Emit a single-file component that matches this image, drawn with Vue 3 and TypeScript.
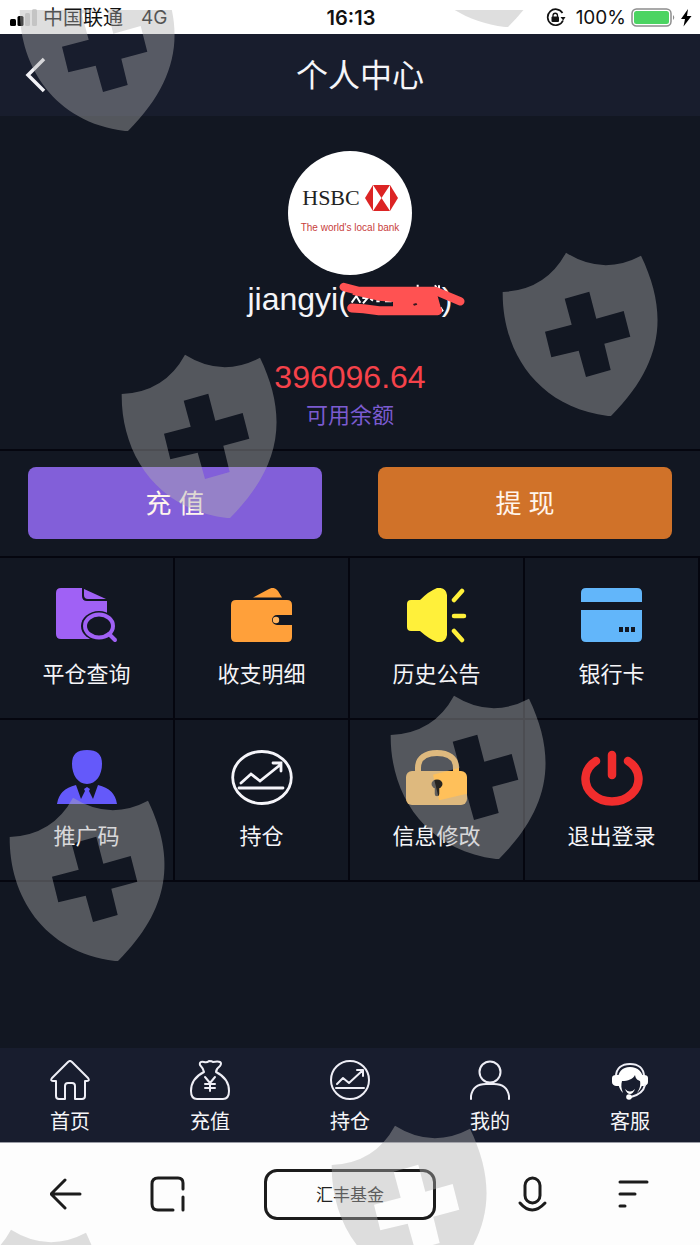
<script setup lang="ts">
interface Item {
  label: string
  icon: string
}

const services: Item[] = [
  { label: '平仓查询', icon: 'search' },
  { label: '收支明细', icon: 'wallet' },
  { label: '历史公告', icon: 'notice' },
  { label: '银行卡', icon: 'card' },
  { label: '推广码', icon: 'person' },
  { label: '持仓', icon: 'chart' },
  { label: '信息修改', icon: 'lock' },
  { label: '退出登录', icon: 'power' },
]

const tabs: Item[] = [
  { label: '首页', icon: 'home' },
  { label: '充值', icon: 'bag' },
  { label: '持仓', icon: 'trend' },
  { label: '我的', icon: 'me' },
  { label: '客服', icon: 'service' },
]

const shields: [number, number][] = [
  [19, -43],
  [399, -147],
  [502, 242],
  [121, 344],
  [390, 685],
  [9, 787],
  [331, 1115],
  [-53, 1219],
]
</script>

<template>
  <div class="page">
    <div class="status">
      <div class="status-left">
        <svg class="signal" width="28" height="18" viewBox="0 0 28 18" aria-hidden="true">
          <rect x="0" y="10" width="6" height="7" rx="1.5" fill="#000" />
          <rect x="7.5" y="7" width="6" height="10" rx="1.5" fill="#000" />
          <rect x="15" y="4" width="5" height="13" rx="1.5" fill="#d2d2d2" />
          <rect x="22" y="0" width="5" height="17" rx="1.5" fill="#d2d2d2" />
        </svg>
        <span class="carrier">中国联通</span>
        <span>4G</span>
      </div>
      <time class="clock">16:13</time>
      <div class="status-right">
        <svg width="20" height="20" viewBox="0 0 20 20" fill="none" stroke="#111" aria-hidden="true">
          <path d="M16.5 5A8 8 0 1 0 17 12.5" stroke-width="1.7" />
          <path d="M14.5 9h5l-2.300 3.500z" fill="#111" stroke="none" />
          <rect x="5.5" y="8.5" width="7.5" height="5.5" rx="1" fill="#111" stroke="none" />
          <path d="M7 9V7.500a2.200 2.200 0 0 1 4.500 0V9" stroke-width="1.3" />
        </svg>
        <span class="percent">100%</span>
        <svg width="46" height="20" viewBox="0 0 46 20" aria-hidden="true">
          <rect x="1" y="1" width="39" height="17" rx="4.5" fill="#fff" stroke="#8d8d8d" stroke-width="1.5" />
          <rect x="3" y="3" width="35" height="13" rx="2.5" fill="#4cd462" />
          <path d="M42 7q2.500 2.500 0 5z" fill="#8d8d8d" />
        </svg>
        <svg width="12" height="18" viewBox="0 0 12 18" aria-hidden="true">
          <path d="M8 0 1 10h4L3.500 17.500 11.500 7H7z" fill="#000" />
        </svg>
      </div>
    </div>

    <header class="header">
      <button class="back" type="button" aria-label="返回">
        <svg width="22" height="36" viewBox="0 0 22 36" fill="none" stroke="#f2f2f6" stroke-width="3.5" aria-hidden="true">
          <path d="M20 2 4 18l16 16" />
        </svg>
      </button>
      <h1>个人中心</h1>
    </header>

    <main>
      <section class="profile">
        <div class="avatar">
          <div class="brand">
            <span>HSBC</span>
            <svg width="33" height="26" viewBox="0 0 33 26" aria-hidden="true">
              <path d="M8 0h17l8 13-8 13H8L0 13z" fill="#dc2424" />
              <path d="M8 0v26l8.500-13zM25 0v26l-8.500-13z" fill="#fff" />
            </svg>
          </div>
          <div class="slogan">The world's local bank</div>
        </div>
        <div class="name">
          jiangyi(<span class="hidden-name"></span>)
          <svg class="scribble" width="126" height="34" viewBox="0 0 378 102" aria-hidden="true">
            <path d="M38 62 52 42l12 20M70 48h16L72 64M94 50l8 6M112 58h10M138 58h20M236 8v16M288 10l12 20M300 10v26M304 76l8 12" fill="none" stroke="#fff" stroke-width="6" />
            <g fill="none" stroke="#ff5252" stroke-linecap="round" stroke-linejoin="round">
              <path d="M14 15 60 27H290L364 58" stroke-width="25" />
              <path d="M38 78 74 80 120 86H296" stroke-width="27" />
            </g>
            <path d="M50 20H290L309 90H162V60L120 56 40 38z" fill="#ff5252" />
            <path d="m222 66 10-3 3 5-10 3z" fill="#3a1820" />
          </svg>
        </div>
        <div class="amount">396096.64</div>
        <div class="amount-label">可用余额</div>
      </section>

      <div class="actions">
        <button type="button" class="recharge">充 值</button>
        <button type="button" class="withdraw">提 现</button>
      </div>

      <nav class="services" aria-label="服务">
        <a v-for="s in services" :key="s.label" href="#">
          <svg width="62" height="56" viewBox="0 0 62 56" fill="none" aria-hidden="true">
            <template v-if="s.icon === 'search'">
              <path d="M5 0h21v8q0 5 5 5h20v38H5q-5 0-5-5V5q0-5 5-5z" fill="#a061f5" />
              <path d="m28 1 22 10H32q-4 0-4-4z" fill="#a061f5" />
              <ellipse cx="43" cy="38" rx="18" ry="15" fill="#121722" />
              <ellipse cx="43" cy="38" rx="14" ry="11.5" stroke="#a061f5" stroke-width="4" />
              <path d="m53 46 6 6" stroke="#a061f5" stroke-width="4" stroke-linecap="round" />
            </template>
            <template v-else-if="s.icon === 'wallet'">
              <path d="M22 9.500 38 1q5-3 9 2l4 6.500z" fill="#ffa03a" />
              <path d="M5 12h51q5 0 5 5v10H46a5 5 0 0 0 0 10h15v12q0 5-5 5H5q-5 0-5-5V17q0-5 5-5z" fill="#ffa03a" />
              <circle cx="45" cy="32" r="3.2" fill="#ffb45f" />
            </template>
            <template v-else-if="s.icon === 'notice'">
              <path d="M5 12h9Q23 3 31 0q9-1 10 7v40q-1 8-10 7-8-3-17-11H5q-4 0-4-4V16q0-4 4-4z" fill="#fff03a" />
              <path d="m48 12 8-9M48 28h10M48 43l8 9" stroke="#fff03a" stroke-width="4.5" stroke-linecap="round" />
            </template>
            <template v-else-if="s.icon === 'card'">
              <path d="M0 14V5q0-5 5-5h51q5 0 5 5v9z" fill="#62b6fa" />
              <path d="M0 22h61v27q0 5-5 5H5q-5 0-5-5z" fill="#62b6fa" />
              <path d="M38 39h4v5h-4zM44 39h4v5h-4zM50 39h4v5h-4z" fill="#121722" />
            </template>
            <template v-else-if="s.icon === 'person'">
              <path d="M31 0C41 0 46 4 46 14c0 11-6 20-15 20S16 25 16 14C16 4 21 0 31 0z" fill="#6459fa" />
              <path d="M20 35q-17 4-19 19h60q-2-15-19-19l-5 14-4-8 1-2-3-2-3 2 1 2-4 8z" fill="#6459fa" />
            </template>
            <template v-else-if="s.icon === 'chart'">
              <g stroke="#f5f5fa" stroke-width="2.8" stroke-linecap="round">
                <ellipse cx="31" cy="27.500" rx="29.300" ry="26" />
                <path d="m10 33 10-9 9 7 20-16M42 13h8v8M8 38h44" />
              </g>
            </template>
            <template v-else-if="s.icon === 'lock'">
              <path d="M12 24V18C12 8 20 3 31 3s19 5 19 15v6" stroke="#ffc05a" stroke-width="6" />
              <rect x="0" y="21" width="61" height="34" rx="6" fill="#ffc05a" />
              <ellipse cx="31" cy="34" rx="5.5" ry="4.5" fill="#262420" />
              <path d="M31 34v10" stroke="#262420" stroke-width="4.5" stroke-linecap="round" />
            </template>
            <template v-else>
              <path d="M15 11a26.500 22.500 0 1 0 32 0M31 5v20" stroke="#f02d2d" stroke-width="8.5" stroke-linecap="round" />
            </template>
          </svg>
          <span>{{ s.label }}</span>
        </a>
      </nav>
    </main>

    <nav class="tabs" aria-label="主导航">
      <a v-for="t in tabs" :key="t.label" href="#">
        <svg width="40" height="40" viewBox="0 0 40 40" fill="none" stroke="#eeeef6" stroke-width="2" stroke-linecap="round" stroke-linejoin="round" aria-hidden="true">
          <path v-if="t.icon === 'home'" d="M18 2q2-2 4 0l16 16q2 3-1 3h-2v15q0 3-3 3h-7V26q0-3-3-3h-4q-3 0-3 3v13H9q-3 0-3-3V21H3q-3 0-1-3z" />
          <template v-else-if="t.icon === 'bag'">
            <path d="M14 12q-1-4-4-7-1-4 4-3 3 1 5-1 3 0 4 1 5-1 7 0 2 1 0 4-4 3-4 6c8 4 13 11 13 19q0 8-6 8H7q-6 0-6-8c0-8 5-15 13-19" />
            <path d="m15 17 5 6 5-6M20 23v8M15 24h10M15 28h10" />
          </template>
          <template v-else-if="t.icon === 'trend'">
            <circle cx="20" cy="20" r="19" />
            <path d="m7 24 6-6 6 5 13-12M27 10h6v6M6 28h28" />
          </template>
          <template v-else-if="t.icon === 'me'">
            <circle cx="20" cy="12" r="10.5" />
            <path d="M1 39v-3q2-12 15-12h8q13 0 15 12v3" />
          </template>
          <template v-else>
            <path d="M6 17C6 8 12 4 20 4s14 4 14 13" />
            <path d="M20 7C12 7 8 12 8 19c0 7 2 11 5 14-2-5-2-8-1-12 6 0 11-2 13-6 1 5 3 5 5 6 1 5-1 9-3 12 4-4 6-8 6-14C33 12 28 7 20 7z" fill="#fff" stroke="none" />
            <path d="M2 18q0-3 4-3h3v11H6q-4-1-4-4zM38 18q0-3-4-3h-3v11h3q4-1 4-4z" fill="#fff" stroke="none" />
            <path d="M15 29q5 5 10 0-2 5-5 5t-5-5z" fill="#fff" stroke="none" />
            <path d="M35 25q-2 9-14 12" />
            <circle cx="19" cy="37" r="2.8" fill="#fff" stroke="none" />
          </template>
        </svg>
        <span>{{ t.label }}</span>
      </a>
    </nav>

    <footer class="browser">
      <div class="tools">
        <button type="button" aria-label="后退">
          <svg width="32" height="36" viewBox="0 0 32 36" aria-hidden="true"><path d="M30 18H2M15 4 1 18l14 14" /></svg>
        </button>
        <button type="button" aria-label="窗口">
          <svg width="36" height="36" viewBox="0 0 36 36" aria-hidden="true"><path d="M23 34H8q-6 0-6-6V8q0-6 6-6h20q5 0 5 5v6M33 21v13" /></svg>
        </button>
      </div>
      <button type="button" class="site">汇丰基金</button>
      <div class="tools">
        <button type="button" aria-label="语音">
          <svg width="36" height="36" viewBox="0 0 36 36" aria-hidden="true"><rect x="11" y="2" width="15" height="25" rx="7.5" /><path d="M6 27q12 14 25 0" /></svg>
        </button>
        <button type="button" aria-label="菜单">
          <svg width="32" height="36" viewBox="0 0 32 36" aria-hidden="true"><path d="M2 6h27M2 18h15M2 30h5" /></svg>
        </button>
      </div>
    </footer>

    <svg class="watermark" aria-hidden="true">
      <path
        v-for="([x, y], i) in shields"
        :key="i"
        :transform="`translate(${x} ${y})`"
        fill="#b0b0b0"
        fill-opacity="0.42"
        fill-rule="evenodd"
        d="M.7 40Q44 38 64 .7 101 24 139 3.700C167 62 161 112 109 164H106C34 155 0 98 .7 40zM62.700 46.700 69.700 72.700 43 79.700 49.300 105.300 76.700 98.700 84 125 108.700 118 102.300 91.700 128.300 84.700 121.700 59 94.300 66.700 87.300 39.700z"
      />
    </svg>
  </div>
</template>

<style>
body {
  margin: 0;
  background: #121722;
}
</style>

<style scoped>
.page {
  position: relative;
  display: flex;
  flex-direction: column;
  min-height: 100vh;
  overflow: hidden;
  background: #121722;
  color: #f5f5f8;
  font-family: "Liberation Sans", "Noto Sans CJK SC", sans-serif;
}

button {
  padding: 0;
  border: 0;
  background: none;
  color: inherit;
  font-family: inherit;
  cursor: pointer;
}

a {
  color: inherit;
  text-decoration: none;
}

svg {
  display: block;
}

.status {
  display: grid;
  grid-template-columns: 1fr auto 1fr;
  align-items: center;
  box-sizing: border-box;
  height: 34px;
  padding: 2px 8px 0 10px;
  background: #fff;
  color: #111;
  font-family: Inter, "Noto Sans CJK SC", sans-serif;
  font-size: 19px;
  line-height: 24px;
}

.status-left,
.status-right {
  display: flex;
  align-items: center;
}

.carrier {
  margin: 0 18px 0 5px;
  font-size: 20px;
}

.clock {
  font-weight: 600;
  font-size: 20px;
}

.status-right {
  justify-content: flex-end;
}

.percent {
  margin: 0 5px 0 10px;
}

.status-right svg:last-child {
  margin-left: 3px;
}

.header {
  display: flex;
  align-items: center;
  height: 82px;
  padding-right: 40px;
  background: #181d2d;
}

.back {
  display: flex;
  align-items: center;
  width: 60px;
  height: 82px;
  padding-left: 24px;
}

h1 {
  flex: 1;
  margin: 0;
  padding-top: 2px;
  font-size: 32px;
  font-weight: 400;
  line-height: 48px;
  text-align: center;
}

main {
  flex: 1;
}

.profile {
  display: flex;
  flex-direction: column;
  align-items: center;
  padding: 35px 0 20px;
  border-bottom: 2px solid #05060f;
}

.avatar {
  display: flex;
  flex-direction: column;
  align-items: center;
  justify-content: center;
  width: 124px;
  height: 124px;
  border-radius: 50%;
  background: #fff;
}

.brand {
  display: flex;
  align-items: center;
  gap: 5px;
  color: #222;
  font-family: "Liberation Serif", serif;
  font-size: 22px;
  line-height: 32px;
}

.slogan {
  margin-bottom: 2px;
  color: #c8403c;
  font-family: "Liberation Sans Narrow", "Liberation Sans", sans-serif;
  font-size: 10px;
  line-height: 28px;
  white-space: nowrap;
}

.name {
  position: relative;
  margin-top: 6px;
  font-size: 32px;
  line-height: 36px;
}

.hidden-name {
  display: inline-block;
  width: 93px;
}

.scribble {
  position: absolute;
  top: 1px;
  right: -12px;
}

.amount {
  margin-top: 42px;
  color: #f5424a;
  font-size: 32px;
  line-height: 36px;
}

.amount-label {
  margin-top: 8px;
  color: #7b5bd0;
  font-size: 22px;
  line-height: 26px;
}

.actions {
  display: grid;
  grid-template-columns: 1fr 1fr;
  gap: 56px;
  padding: 16px 28px 17px;
  border-bottom: 2px solid #05060f;
}

.actions button {
  height: 72px;
  padding-bottom: 3px;
  border-radius: 8px;
  color: #fff5ec;
  font-size: 26px;
}

.recharge {
  background: #825fd9;
}

.withdraw {
  background: #d07229;
}

.services {
  display: grid;
  grid-template-columns: repeat(4, 1fr);
}

.services a {
  display: flex;
  flex-direction: column;
  align-items: center;
  gap: 18px;
  padding: 30px 0;
  border-right: 2px solid #05060f;
  border-bottom: 2px solid #05060f;
  font-size: 22px;
  line-height: 26px;
}

.tabs {
  display: grid;
  grid-template-columns: repeat(5, 1fr);
  padding: 12px 0 8px;
  border-bottom: 1px solid #9a9ca5;
  background: #181d2e;
}

.tabs a {
  display: flex;
  flex-direction: column;
  align-items: center;
  gap: 10px;
  font-size: 20px;
  line-height: 24px;
}

.browser {
  display: flex;
  align-items: center;
  justify-content: space-between;
  height: 102px;
  padding: 0 50px;
  background: #fdfdfd;
  color: #222;
}

.tools {
  display: flex;
  gap: 68px;
}

.browser svg {
  fill: none;
  stroke: #1c1c1c;
  stroke-width: 3;
  stroke-linecap: round;
  stroke-linejoin: round;
}

.site {
  width: 172px;
  height: 51px;
  padding-bottom: 2px;
  border: 3px solid #1c1c1c;
  border-radius: 13px;
  font-size: 17px;
}

.watermark {
  position: absolute;
  top: 10px;
  left: 0;
  width: 100%;
  height: 100%;
  overflow: hidden;
  pointer-events: none;
}
</style>
